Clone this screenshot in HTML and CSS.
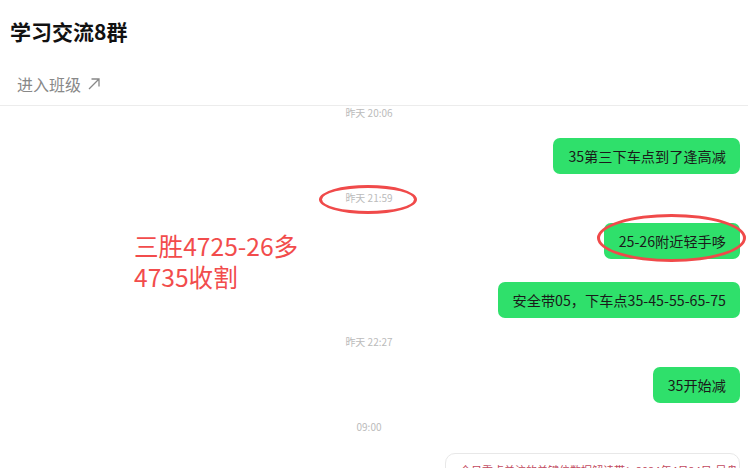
FILE: index.html
```html
<!DOCTYPE html>
<html lang="zh-CN">
<head>
    <meta charset="UTF-8">
    <meta name="viewport" content="width=device-width, initial-scale=1.0">
    <title>学习交流8群</title>
    <link rel="stylesheet" href="styles.css">
</head>
<body>
    <div class="page">
        <div class="header">
            <div class="title">学习交流8群</div>
            <div class="enter">
                <span>进入班级</span>
                <svg class="arrow" width="14" height="14" viewBox="0 0 14 14">
                    <path d="M2 12 L12 2 M4.5 2 H12 V9.5" fill="none" stroke="#888" stroke-width="1.3"/>
                </svg>
            </div>
        </div>
        <div class="chat">
            <div class="time first">昨天 20:06</div>
            <div class="row"><div class="bubble">35第三下车点到了逢高减</div></div>
            <div class="time">昨天 21:59</div>
            <div class="row"><div class="bubble">25-26附近轻手哆</div></div>
            <div class="row"><div class="bubble">安全带05，下车点35-45-55-65-75</div></div>
            <div class="time">昨天 22:27</div>
            <div class="row"><div class="bubble">35开始减</div></div>
            <div class="time">09:00</div>
            <div class="card">今日重点关注的关键位数据解读带：2024年4月24日-早盘</div>

            <!-- hand drawn marks over the chat -->
            <div class="note">三胜4725-26多<br>4735收割</div>
            <div class="ring ring-time"></div>
            <div class="ring ring-msg"></div>
        </div>
    </div>
</body>
</html>
```

FILE: styles.css
```css
* {
  box-sizing: border-box;
}
body {
  margin: 0;
  background: #fff;
  font-family: "Noto Sans CJK SC", "Noto Sans", sans-serif;
  color: #1a1a1a;
  overflow: hidden;
}
.page {
  width: 748px;
  height: 468px;
  overflow: hidden;
}
.header {
  border-bottom: 1px solid #ececec;
}
.header .title {
  height: 62px;
  line-height: 62px;
  padding-left: 10px;
  font-size: 21px;
  font-weight: bold;
  color: #111;
}
.header .enter {
  height: 43px;
  padding-left: 17px;
  display: flex;
  align-items: center;
  gap: 6px;
  font-size: 16px;
  color: #888;
}
.chat {
  position: relative;
  display: flex;
  flex-direction: column;
  padding: 0 8px 0 0;
}
.chat .time {
  height: 14px;
  line-height: 14px;
  margin: 17px 0 18px;
  padding-right: 2px;
  text-align: center;
  font-size: 10px;
  color: #bbb;
}
.chat .time.first {
  margin-top: 0;
}
.chat .row {
  display: flex;
  justify-content: flex-end;
}
.chat .row + .row {
  margin-top: 23px;
}
.chat .bubble {
  height: 36px;
  line-height: 36px;
  padding: 0 14px 0 15px;
  background: #2fe06b;
  border-radius: 7px;
  font-size: 14.2px;
  color: #1a1a1a;
  white-space: nowrap;
}
.chat .card {
  align-self: flex-end;
  width: 295px;
  height: 60px;
  margin-top: 1px;
  border: 1px solid #e8e8e8;
  border-radius: 10px;
  padding: 8px 14px;
  font-size: 11px;
  color: #c24a5e;
  white-space: nowrap;
  overflow: hidden;
}
.chat .note {
  position: absolute;
  left: 134px;
  top: 124px;
  font-size: 24.6px;
  line-height: 31px;
  color: #f24c4c;
}
.chat .ring {
  position: absolute;
  border: 3px solid #f04a4a;
  border-radius: 50%;
}
.chat .ring-time {
  left: 319px;
  top: 79px;
  width: 98px;
  height: 29px;
}
.chat .ring-msg {
  left: 597px;
  top: 108px;
  width: 149px;
  height: 48px;
}
```
